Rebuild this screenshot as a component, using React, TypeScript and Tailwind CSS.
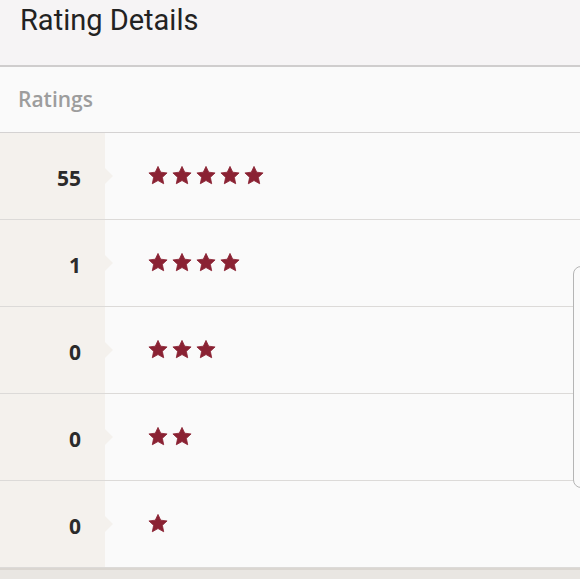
const counts = [
  { stars: 5, count: 55 },
  { stars: 4, count: 1 },
  { stars: 3, count: 0 },
  { stars: 2, count: 0 },
  { stars: 1, count: 0 },
];

const Star = () => (
  <svg width="20" height="19" viewBox="0 0 24 23" className="shrink-0">
    <path
      d="M12 0.5l3.3 7 7.7 0.9-5.7 5.3 1.6 7.8L12 17.6l-6.9 3.9 1.6-7.8L1 8.4l7.7-0.9z"
      fill="#8a2233"
      stroke="#8a2233"
      strokeWidth="1"
      strokeLinejoin="round"
    />
  </svg>
);

const RatingRow = ({ stars, count }: { stars: number; count: number }) => {
  return (
    <div className="flex h-[87px] border-b border-[#dcdad8]">
      <div className="relative w-[105px] shrink-0 bg-[#f4f1ed] flex items-center justify-end pr-[24px]">
        <span className="text-[21px] font-bold text-[#2b2b2b] pt-[6px]">{count}</span>
        {/* little notch pointing into the star column */}
        <div className="absolute right-[-8px] top-1/2 -translate-y-1/2 w-0 h-0 border-y-[8px] border-y-transparent border-l-[8px] border-l-[#f4f1ed]" />
      </div>
      <div className="flex-1 flex items-center gap-[4px] pl-[43px] pb-[2px]">
        {Array.from({ length: stars }).map((_, i) => (
          <Star key={i} />
        ))}
      </div>
    </div>
  );
};

export default function App() {
  return (
    <div className="relative w-[580px] h-[579px] overflow-hidden bg-[#e9e6e2] font-['Open_Sans',sans-serif]">
      <div className="h-[65px] bg-[#f6f4f5] pl-[20px] pt-[1px]">
        <h1 className="text-[29px] leading-[38px] text-[#222] font-['Roboto',sans-serif]">Rating Details</h1>
      </div>
      <div className="h-[2px] bg-[#cfcdcd]" />
      <div className="h-[66px] bg-[#fafafa] border-b border-[#d4d2d2] flex items-center pl-[18px]">
        <span className="text-[21px] font-semibold text-[#9d9d9d]">Ratings</span>
      </div>
      <div className="bg-[#fafafa] border-b-[2px] border-[#dad6d1]">
        {counts.map((c, i) => (
          <RatingRow key={i} stars={c.stars} count={c.count} />
        ))}
      </div>
      <div className="absolute left-[573px] top-[266px] w-[24px] h-[222px] rounded-[8px] border border-[#b5b5b5] bg-[#fafafa]" />
    </div>
  );
}
